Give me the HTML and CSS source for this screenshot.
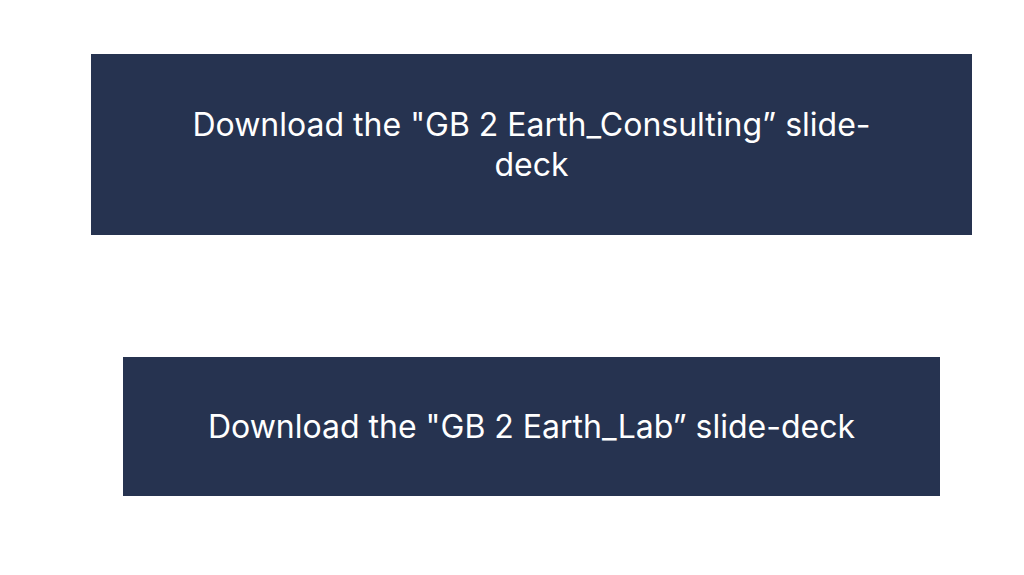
FILE: index.html
```html
<!DOCTYPE html>
<html lang="en">
<head>
<meta charset="utf-8">
<title>Downloads</title>
<link rel="stylesheet" href="styles.css">
</head>
<body>
<main class="page">
  <a class="btn btn-consulting" href="#">Download the "GB 2 Earth_Consulting” slide-deck</a>
  <a class="btn btn-lab" href="#">Download the "GB 2 Earth_Lab” slide-deck</a>
</main>
</body>
</html>
```

FILE: styles.css
```css
html, body {
  margin: 0;
  padding: 0;
  background: #ffffff;
}
.page {
  display: flex;
  flex-direction: column;
  align-items: flex-start;
  padding-top: 54px;
  gap: 122px;
  font-family: Inter, "Noto Sans", sans-serif;
}
.btn {
  display: flex;
  align-items: center;
  justify-content: center;
  box-sizing: border-box;
  background: #263350;
  color: #ffffff;
  text-decoration: none;
  text-align: center;
  font-size: 32px;
  line-height: 40px;
  font-weight: 400;
}
.btn-consulting {
  margin-left: 91px;
  width: 881px;
  height: 181px;
  padding: 0 80px;
}
.btn-lab {
  margin-left: 123px;
  width: 817px;
  height: 139px;
  padding: 0 30px;
}
```
